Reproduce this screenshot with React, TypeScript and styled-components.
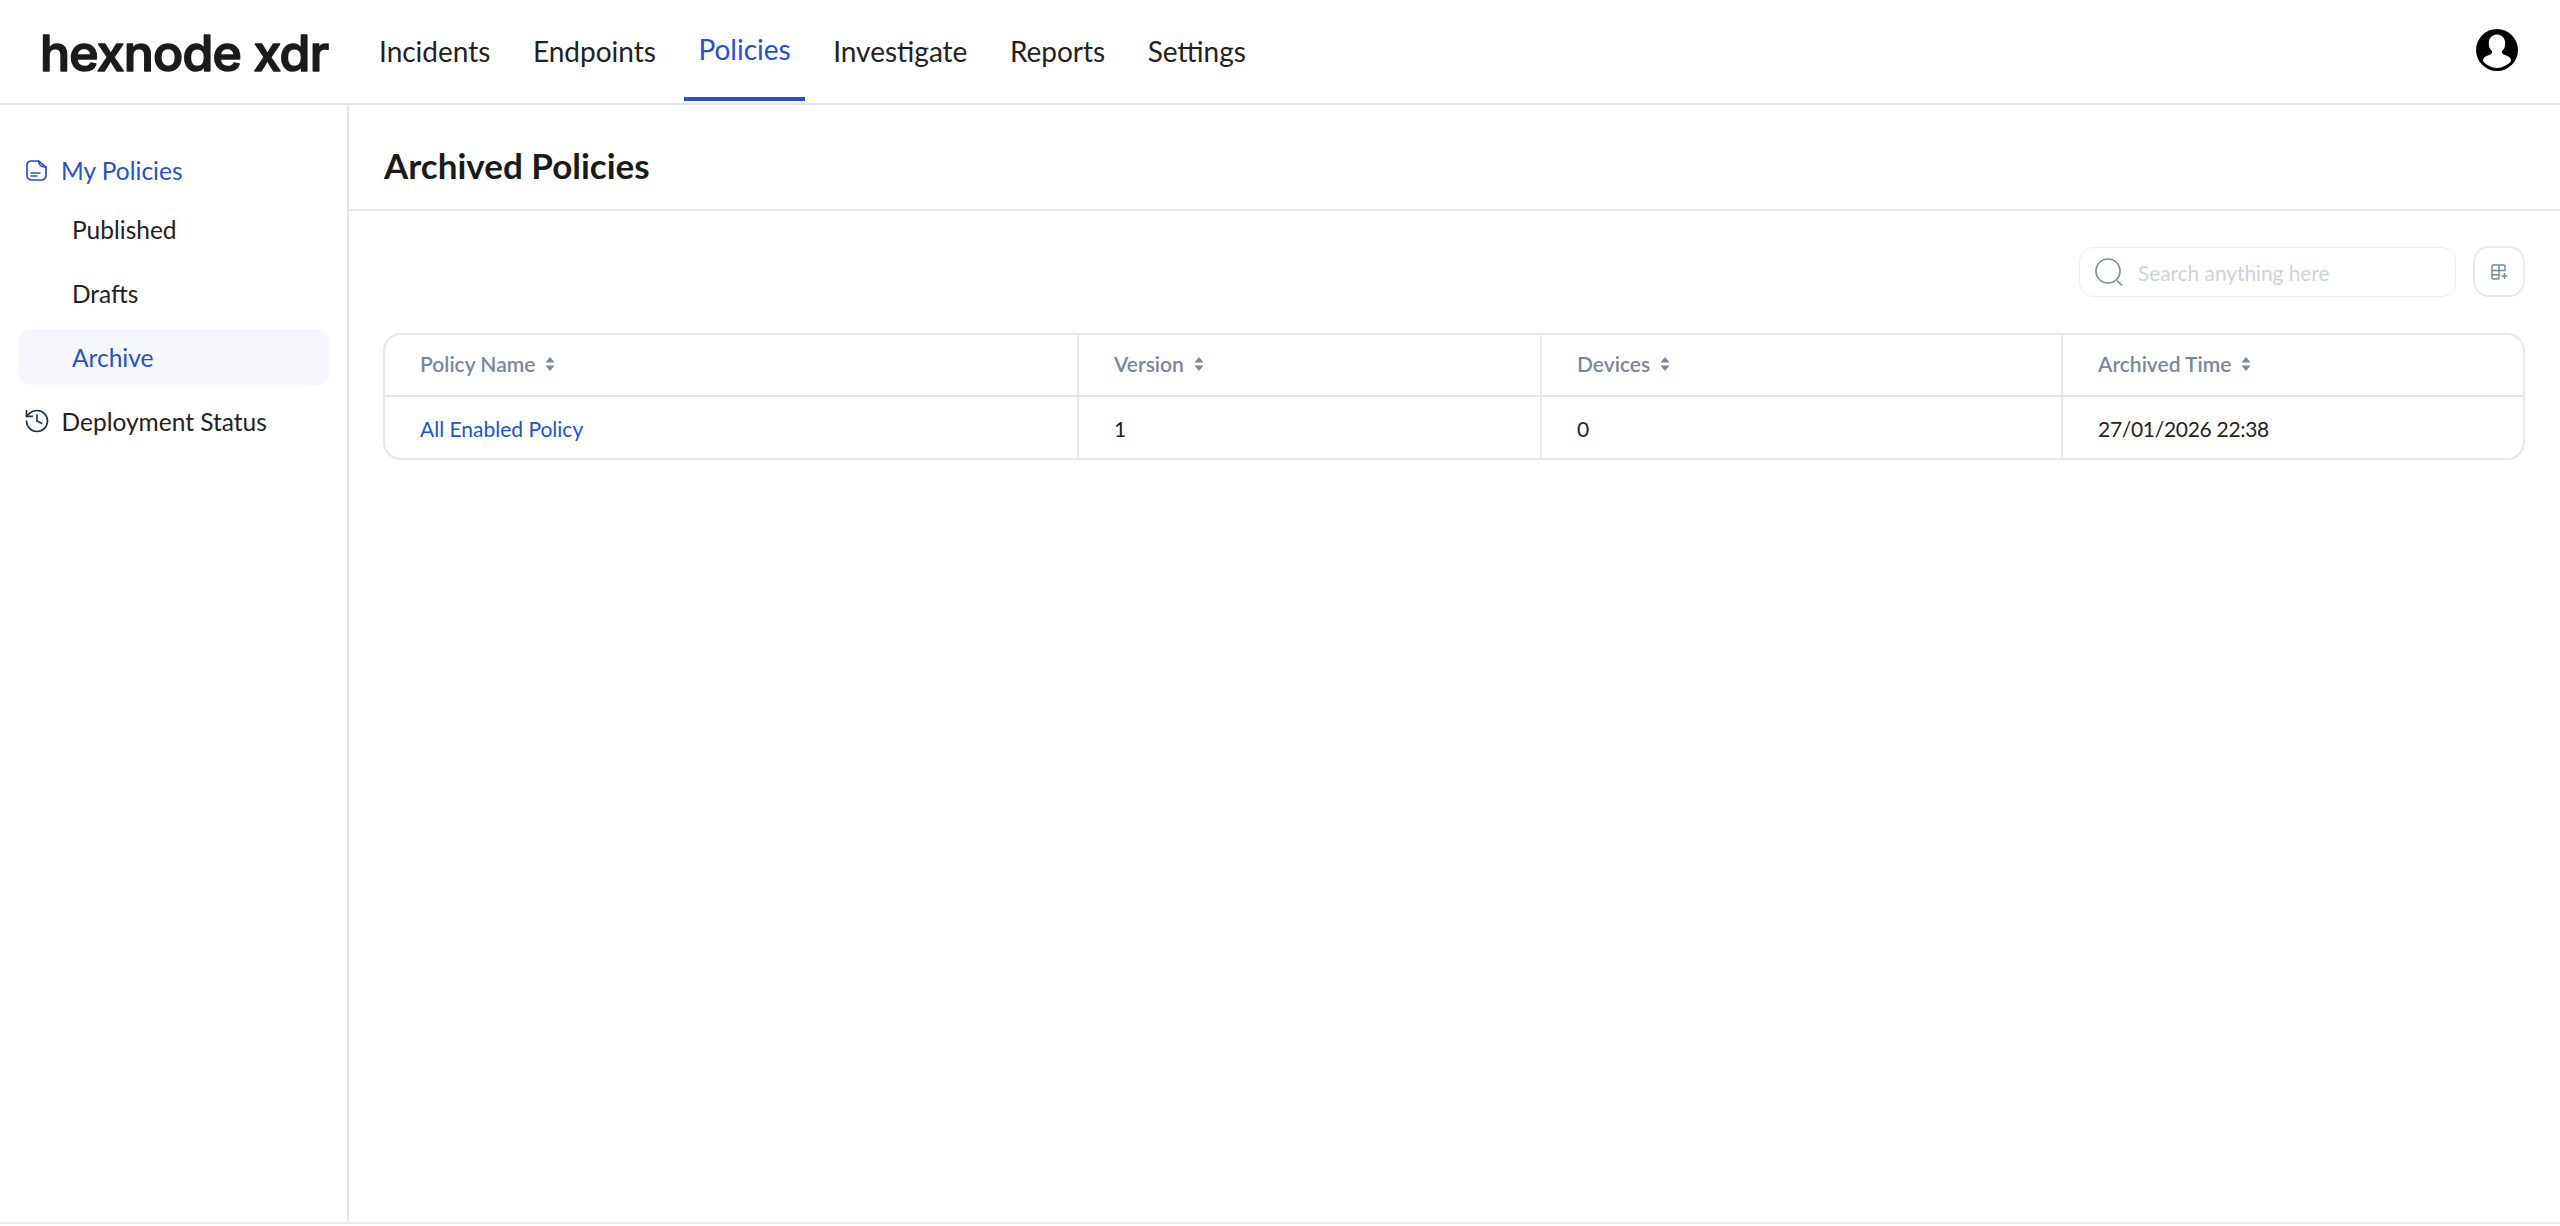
import React from "react";
import styled, { createGlobalStyle } from "styled-components";
import { History } from "lucide-react";

const Global = createGlobalStyle`
  html, body { margin: 0; padding: 0; background: #fff; }
  body { font-family: Lato, "Liberation Sans", sans-serif; color: #222; }
  * { box-sizing: border-box; }
`;

const Page = styled.div`
  display: flex;
  flex-direction: column;
  height: 1226px;
  overflow: hidden;
  background: #fff;
`;

const Header = styled.header`
  display: flex;
  align-items: stretch;
  flex: 0 0 105px;
  padding: 0 42px 2px 40px;
  border-bottom: 2px solid #e3e5e8;
`;

const Logo = styled.svg`
  width: 325px;
  height: 101px;
  flex: none;
  font-family: Inter, sans-serif;
  font-size: 50px;
  font-weight: 500;
`;

const Nav = styled.nav`
  display: flex;
  gap: 14.5px;
  flex: 1;
`;

const Tab = styled.a<{ $active?: boolean }>`
  display: flex;
  align-items: center;
  padding: 5px 14px ${(p) => (p.$active ? "4px" : "0")};
  font-size: 28px;
  color: ${(p) => (p.$active ? "#2450d3" : "#222")};
  border-bottom: 4px solid ${(p) => (p.$active ? "#2450d3" : "transparent")};
  white-space: nowrap;
`;

const Avatar = styled.div`
  align-self: center;
  width: 42px;
  height: 42px;
  margin-top: -1px;
`;

const Body = styled.div`
  display: flex;
  flex: 1;
  min-height: 0;
  border-bottom: 2px solid #e8e9eb;
  margin-bottom: 2px;
`;

const Sidebar = styled.aside`
  flex: 0 0 349px;
  padding: 37px 18px 0;
  border-right: 2px solid #e3e5e8;
  display: flex;
  flex-direction: column;
  gap: 8px;
`;

const ParentItem = styled.div<{ $active?: boolean; $tight?: boolean }>`
  display: flex;
  align-items: center;
  gap: 14px;
  height: 56px;
  padding-left: 8px;
  font-size: 24.5px;
  color: ${(p) => (p.$active ? "#2450d3" : "#222")};
  margin-bottom: ${(p) => (p.$tight ? "-5px" : "0")};
`;

const SubItem = styled.div<{ $active?: boolean }>`
  display: flex;
  align-items: center;
  height: 56px;
  padding-left: 54px;
  font-size: 24.5px;
  border-radius: 14px;
  color: ${(p) => (p.$active ? "#2450d3" : "#222")};
  background: ${(p) => (p.$active ? "#f5f7fd" : "transparent")};
`;

const ClockIcon = styled(History)`
  flex: none;
  margin: 0 -3px 0 -3.5px;
`;

const Main = styled.main`
  flex: 1;
  display: flex;
  flex-direction: column;
  min-width: 0;
`;

const TitleBar = styled.div`
  display: flex;
  align-items: center;
  flex: 0 0 106px;
  padding: 16px 35px 0;
  border-bottom: 2px solid #e6e8eb;
`;

const Title = styled.h1`
  margin: 0;
  font-size: 35px;
  font-weight: 700;
  color: #1a1a1a;
`;

const Content = styled.div`
  padding: 35px 35px 0 34px;
  display: flex;
  flex-direction: column;
  gap: 36px;
`;

const Toolbar = styled.div`
  display: flex;
  justify-content: flex-end;
  align-items: flex-end;
  gap: 17px;
`;

const Search = styled.div`
  display: flex;
  align-items: center;
  gap: 15px;
  width: 377px;
  height: 50px;
  padding-left: 15px;
  border: 1.5px solid #eceef1;
  border-radius: 14px;
  font-size: 20.8px;
  color: #ccd3dc;
`;

const IconButton = styled.button`
  display: flex;
  align-items: center;
  justify-content: center;
  width: 52px;
  height: 51px;
  padding: 0;
  background: #fff;
  border: 2px solid #e6e9ed;
  border-radius: 16px;
`;

const Table = styled.div`
  border: 2px solid #e6e8eb;
  border-radius: 18px;
  overflow: hidden;
`;

const Row = styled.div<{ $head?: boolean }>`
  display: grid;
  grid-template-columns: 692px 463px 521px 1fr;
  height: ${(p) => (p.$head ? "62px" : "61px")};
  border-bottom: ${(p) => (p.$head ? "2px solid #e3e5e8" : "none")};
`;

const Cell = styled.div<{ $head?: boolean; $link?: boolean; $date?: boolean }>`
  display: flex;
  align-items: center;
  gap: 10px;
  padding: ${(p) => (p.$head ? "0 0 3px 35px" : "1px 0 0 35px")};
  font-size: 21px;
  font-weight: ${(p) => (p.$head ? 600 : 400)};
  letter-spacing: ${(p) => (p.$date ? "-0.3px" : "0")};
  color: ${(p) => (p.$head ? "#78889a" : p.$link ? "#2450d3" : "#222")};
  border-left: 2px solid #e8eaed;
  &:first-child { border-left: none; }
`;

const FileIcon = () => (
  <svg width="21" height="21" viewBox="0 0 21 21" fill="none" stroke="#2450d3" strokeWidth="1.7" strokeLinecap="round" strokeLinejoin="round" style={{ flex: "none" }}>
    <path d="M5 1h7.500L20 7.200v8.300a4.500 4.500 0 0 1-4.500 4.500h-10A4.500 4.500 0 0 1 1 15.500V5a4 4 0 0 1 4-4Z" />
    <path d="M12.500 1c.1 2.600.9 4 2.300 4.900 1.300.9 3 1.300 5.200 1.300" />
    <path d="M5 13h9M5 16h6" strokeWidth="1.5" />
  </svg>
);

const SearchIcon = () => (
  <svg width="28" height="28" viewBox="0 0 28 28" fill="none" stroke="#7b8ca0" strokeWidth="1.7" strokeLinecap="round" style={{ flex: "none" }}>
    <circle cx="13" cy="13" r="12" />
    <path d="M22.500 23l4 4" />
  </svg>
);

const ColumnsIcon = () => (
  <svg width="17" height="16" viewBox="0 0 17 16" fill="none" stroke="#78899c" strokeWidth="1.5">
    <path d="M8 15H2a1 1 0 0 1-1-1V2a1 1 0 0 1 1-1h11a1 1 0 0 1 1 1v4.500H1M1 10.800h7M8 1v14" />
    <path d="M13.500 9v6M10.500 12h6" strokeWidth="1.6" />
  </svg>
);

const SortIcon = () => (
  <svg width="10" height="14" viewBox="0 0 10 14" fill="#78889a" style={{ flex: "none" }}>
    <path d="M5 0l4.500 5.500h-9zM5 14L.5 8.500h9z" />
  </svg>
);

const AvatarIcon = () => (
  <svg width="42" height="42" viewBox="0 0 42 42">
    <circle cx="21" cy="21" r="21" fill="#000" />
    <path fill="#fff" d="M21 5.500c-5 0-8.200 3.600-8.200 8.700 0 3 1 5.600 2.700 7.400.8.800.7 2.500-.3 3.300-1.700 1.300-4.900 1.700-6.700 3.400-1 .9-1.500 2.500-1.500 4.300C10.500 36 15.500 39 21 39s10.500-3 14-6.400c0-1.800-.5-3.400-1.500-4.300-1.800-1.700-5-2.100-6.700-3.400-1-.8-1.100-2.500-.3-3.300 1.700-1.800 2.700-4.400 2.700-7.400 0-5.100-3.200-8.700-8.200-8.700Z" />
  </svg>
);

const columns = ["Policy Name", "Version", "Devices", "Archived Time"];

export default function App() {
  return (
    <Page>
      <Global />
      <Header>
        <Logo viewBox="0 0 325 101">
          <text x="0" y="70.500" textLength="289" lengthAdjust="spacing" fill="#1b1b1b" stroke="#1b1b1b" strokeWidth="1.6" strokeLinejoin="round">hexnode xdr</text>
        </Logo>
        <Nav>
          <Tab>Incidents</Tab>
          <Tab>Endpoints</Tab>
          <Tab $active>Policies</Tab>
          <Tab>Investigate</Tab>
          <Tab>Reports</Tab>
          <Tab>Settings</Tab>
        </Nav>
        <Avatar><AvatarIcon /></Avatar>
      </Header>
      <Body>
        <Sidebar>
          <ParentItem $active $tight><FileIcon />My Policies</ParentItem>
          <SubItem>Published</SubItem>
          <SubItem>Drafts</SubItem>
          <SubItem $active>Archive</SubItem>
          <ParentItem>
            <ClockIcon size={28} color="#1f2f4d" strokeWidth={1.4} />
            Deployment Status
          </ParentItem>
        </Sidebar>
        <Main>
          <TitleBar><Title>Archived Policies</Title></TitleBar>
          <Content>
            <Toolbar>
              <Search><SearchIcon />Search anything here</Search>
              <IconButton aria-label="Columns"><ColumnsIcon /></IconButton>
            </Toolbar>
            <Table>
              <Row $head>
                {columns.map((c) => (
                  <Cell $head key={c}>{c}<SortIcon /></Cell>
                ))}
              </Row>
              <Row>
                <Cell $link>All Enabled Policy</Cell>
                <Cell>1</Cell>
                <Cell>0</Cell>
                <Cell $date>27/01/2026 22:38</Cell>
              </Row>
            </Table>
          </Content>
        </Main>
      </Body>
    </Page>
  );
}
